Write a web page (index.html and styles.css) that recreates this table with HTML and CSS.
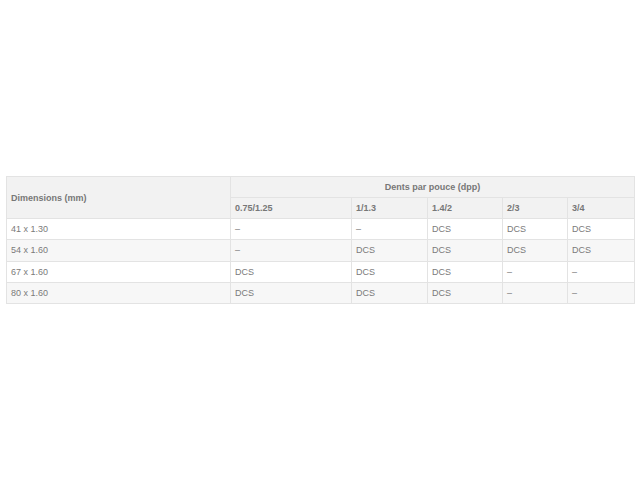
FILE: index.html
```html
<!DOCTYPE html>
<html>
<head>
<meta charset="utf-8">
<link rel="stylesheet" href="styles.css">
</head>
<body>
<main class="page">
<table class="spec">
<colgroup>
<col class="c0"><col class="c1"><col class="c2"><col class="c3"><col class="c4"><col class="c5">
</colgroup>
<thead>
<tr class="h1"><th rowspan="2" class="dim">Dimensions (mm)</th><th colspan="5" class="group">Dents par pouce (dpp)</th></tr>
<tr class="h2"><th>0.75/1.25</th><th>1/1.3</th><th>1.4/2</th><th>2/3</th><th>3/4</th></tr>
</thead>
<tbody>
<tr><td>41 x 1.30</td><td>–</td><td>–</td><td>DCS</td><td>DCS</td><td>DCS</td></tr>
<tr><td>54 x 1.60</td><td>–</td><td>DCS</td><td>DCS</td><td>DCS</td><td>DCS</td></tr>
<tr><td>67 x 1.60</td><td>DCS</td><td>DCS</td><td>DCS</td><td>–</td><td>–</td></tr>
<tr><td>80 x 1.60</td><td>DCS</td><td>DCS</td><td>DCS</td><td>–</td><td>–</td></tr>
</tbody>
</table>
</main>
</body>
</html>
```
FILE: styles.css
```css
html, body { margin: 0; padding: 0; background: #fff; }
.page {
  height: 480px;
  display: flex;
  align-items: flex-start;
  padding: 176px 6px 0;
  box-sizing: border-box;
}
.spec {
  width: 628px;
  border-collapse: collapse;
  table-layout: fixed;
  font-family: "Liberation Sans", Arial, sans-serif;
  font-size: 9px;
  color: #7a7a7a;
}
.c0 { width: 224px; }
.c1 { width: 121px; }
.c2 { width: 76px; }
.c3 { width: 75px; }
.c4 { width: 65px; }
.c5 { width: 67px; }
.spec th, .spec td {
  border: 1px solid #e3e3e3;
  padding: 0 4px;
  height: 20px;
  text-align: left;
  white-space: nowrap;
}
.spec td { height: 20.3px; }
.spec th {
  background: #f2f2f2;
  font-weight: bold;
  color: #777;
}
.spec th.group { text-align: center; }
.spec tbody tr:nth-child(odd) td { background: #fff; }
.spec tbody tr:nth-child(even) td { background: #f7f7f7; }
```
